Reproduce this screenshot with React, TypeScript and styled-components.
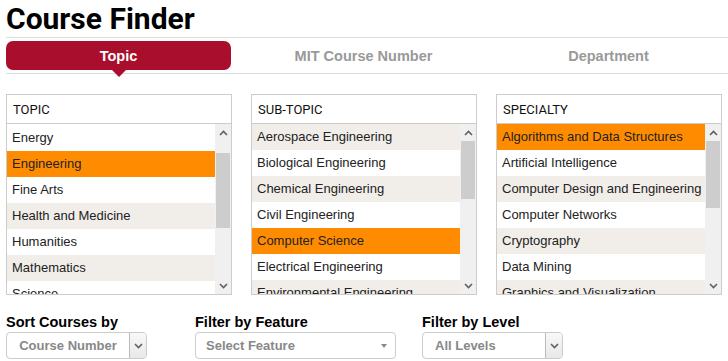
import React from "react";
import styled, { createGlobalStyle } from "styled-components";

const GlobalStyle = createGlobalStyle`
  body {
    margin: 0;
    background: #ffffff;
    font-family: "Liberation Sans", Arial, sans-serif;
    color: #333333;
  }
`;

const Page = styled.div`
  width: 728px;
  height: 361px;
  overflow: hidden;
  padding-left: 6px;
  box-sizing: border-box;
`;

const Title = styled.h1`
  margin: 0;
  height: 37px;
  font-family: Roboto, "Noto Sans", sans-serif;
  font-size: 30px;
  font-weight: 700;
  line-height: 38px;
  color: #000000;
`;

const TabBar = styled.div`
  display: grid;
  grid-template-columns: repeat(3, 225px);
  column-gap: 20px;
  padding: 3px 0;
  border-top: 1px solid #dddddd;
  border-bottom: 1px solid #dddddd;
`;

const Tab = styled.div<{ $active?: boolean }>`
  position: relative;
  height: 29px;
  display: flex;
  align-items: center;
  justify-content: center;
  border-radius: 7px;
  font-size: 14.5px;
  font-weight: 700;
  background: ${(p) => (p.$active ? "#a90f2d" : "transparent")};
  color: ${(p) => (p.$active ? "#ffffff" : "#999999")};

  &::after {
    content: "";
    display: ${(p) => (p.$active ? "block" : "none")};
    position: absolute;
    left: 50%;
    bottom: -7px;
    margin-left: -7px;
    border-left: 7px solid transparent;
    border-right: 7px solid transparent;
    border-top: 7px solid #a90f2d;
  }
`;

const Panels = styled.div`
  display: grid;
  grid-template-columns: repeat(3, 226px);
  column-gap: 19px;
  margin-top: 20px;
`;

const Panel = styled.div`
  border: 1px solid #cccccc;
  display: flex;
  flex-direction: column;
`;

const PanelHeader = styled.div`
  height: 28px;
  display: flex;
  align-items: center;
  padding-left: 6px;
  border-bottom: 1px solid #cccccc;
  font-family: Roboto, "Noto Sans", sans-serif;
  font-size: 13px;
  color: #111111;
`;

const ListArea = styled.div`
  height: 170px;
  display: flex;
`;

const Rows = styled.div<{ $offset: number }>`
  flex: 1;
  overflow: hidden;
  padding-top: ${(p) => p.$offset}px;
`;

const Row = styled.div<{ $alt: boolean; $selected: boolean }>`
  height: 26px;
  line-height: 26px;
  padding-left: 5px;
  font-size: 13px;
  white-space: nowrap;
  color: #222222;
  background: ${(p) =>
    p.$selected ? "#ff8c00" : p.$alt ? "#f1eeea" : "#ffffff"};
`;

const Scrollbar = styled.div`
  width: 16px;
  background: #f0f0f0;
  display: flex;
  flex-direction: column;
`;

const ScrollArrow = styled.div`
  height: 17px;
  display: flex;
  align-items: center;
  justify-content: center;
  flex-shrink: 0;
`;

const Track = styled.div`
  flex: 1;
  position: relative;
`;

const Thumb = styled.div`
  position: absolute;
  left: 1px;
  right: 1px;
  background: #cdcdcd;
`;

const Filters = styled.div`
  display: flex;
  margin-top: 19px;
`;

const FilterGroup = styled.div<{ $width: number }>`
  width: ${(p) => p.$width}px;
  display: flex;
  flex-direction: column;
  align-items: flex-start;
`;

const FilterLabel = styled.div`
  font-size: 14.5px;
  font-weight: 700;
  color: #000000;
  height: 16px;
  line-height: 16px;
`;

const SelectBox = styled.div<{ $width: number }>`
  margin-top: 2px;
  width: ${(p) => p.$width}px;
  height: 27px;
  box-sizing: border-box;
  border: 1px solid #cccccc;
  border-radius: 4px;
  display: flex;
  align-items: center;
  background: #ffffff;
`;

const SelectText = styled.div<{ $center?: boolean; $pad?: number }>`
  flex: 1;
  font-size: 13px;
  font-weight: 700;
  color: #888888;
  padding-left: ${(p) => (p.$center ? 0 : p.$pad ?? 12)}px;
  text-align: ${(p) => (p.$center ? "center" : "left")};
`;

const DropButton = styled.div`
  width: 17px;
  height: 100%;
  box-sizing: border-box;
  border-left: 1px solid #bbbbbb;
  background: linear-gradient(#f8f8f8, #e8e8e8);
  border-radius: 0 3px 3px 0;
  display: flex;
  align-items: center;
  justify-content: center;
`;

const Caret = styled.div`
  width: 0;
  height: 0;
  margin-right: 8px;
  border-left: 3px solid transparent;
  border-right: 3px solid transparent;
  border-top: 4px solid #888888;
`;

const Chevron = ({ up }: { up?: boolean }) => (
  <svg width="9" height="6" viewBox="0 0 9 6">
    <path
      d={up ? "M1 5 L4.5 1.5 L8 5" : "M1 1 L4.5 4.5 L8 1"}
      fill="none"
      stroke="#606060"
      strokeWidth="1.6"
    />
  </svg>
);

type ListProps = {
  title: string;
  items: string[];
  selected: string;
  startAlt: boolean;
  offset: number;
  thumbTop: number;
  thumbHeight: number;
};

const ListPanel = ({ title, items, selected, startAlt, offset, thumbTop, thumbHeight }: ListProps) => (
  <Panel>
    <PanelHeader>{title}</PanelHeader>
    <ListArea>
      <Rows $offset={offset}>
        {items.map((item, i) => (
          <Row key={item} $alt={(i % 2 === 0) === startAlt} $selected={item === selected}>
            {item}
          </Row>
        ))}
      </Rows>
      <Scrollbar>
        <ScrollArrow>
          <Chevron up />
        </ScrollArrow>
        <Track>
          <Thumb style={{ top: thumbTop, height: thumbHeight }} />
        </Track>
        <ScrollArrow>
          <Chevron />
        </ScrollArrow>
      </Scrollbar>
    </ListArea>
  </Panel>
);

const App = () => (
  <Page>
    <GlobalStyle />
    <Title>Course Finder</Title>
    <TabBar>
      <Tab $active>Topic</Tab>
      <Tab>MIT Course Number</Tab>
      <Tab>Department</Tab>
    </TabBar>
    <Panels>
      <ListPanel
        title="TOPIC"
        items={["Energy", "Engineering", "Fine Arts", "Health and Medicine", "Humanities", "Mathematics", "Science"]}
        selected="Engineering"
        startAlt={false}
        offset={1}
        thumbTop={12}
        thumbHeight={75}
      />
      <ListPanel
        title="SUB-TOPIC"
        items={[
          "Aerospace Engineering",
          "Biological Engineering",
          "Chemical Engineering",
          "Civil Engineering",
          "Computer Science",
          "Electrical Engineering",
          "Environmental Engineering",
        ]}
        selected="Computer Science"
        startAlt
        offset={0}
        thumbTop={0}
        thumbHeight={58}
      />
      <ListPanel
        title="SPECIALTY"
        items={[
          "Algorithms and Data Structures",
          "Artificial Intelligence",
          "Computer Design and Engineering",
          "Computer Networks",
          "Cryptography",
          "Data Mining",
          "Graphics and Visualization",
        ]}
        selected="Algorithms and Data Structures"
        startAlt
        offset={0}
        thumbTop={0}
        thumbHeight={67}
      />
    </Panels>
    <Filters>
      <FilterGroup $width={189}>
        <FilterLabel>Sort Courses by</FilterLabel>
        <SelectBox $width={141}>
          <SelectText $center>Course Number</SelectText>
          <DropButton>
            <Chevron />
          </DropButton>
        </SelectBox>
      </FilterGroup>
      <FilterGroup $width={227}>
        <FilterLabel>Filter by Feature</FilterLabel>
        <SelectBox $width={201}>
          <SelectText $pad={10}>Select Feature</SelectText>
          <Caret />
        </SelectBox>
      </FilterGroup>
      <FilterGroup $width={160}>
        <FilterLabel>Filter by Level</FilterLabel>
        <SelectBox $width={141}>
          <SelectText $pad={12}>All Levels</SelectText>
          <DropButton>
            <Chevron />
          </DropButton>
        </SelectBox>
      </FilterGroup>
    </Filters>
  </Page>
);

export default App;
